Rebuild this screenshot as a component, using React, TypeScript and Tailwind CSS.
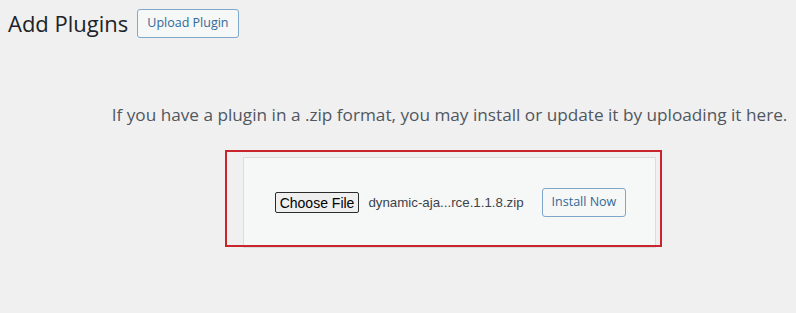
import React from "react";

export default function App() {
  return (
    <div
      className="w-[796px] h-[313px] bg-[#f0f0f1] overflow-hidden text-[#3c434a]"
      style={{ fontFamily: '"Open Sans", sans-serif' }}
    >
      <div className="flex items-center pl-[8px] pt-[9px] gap-[9px]">
        <h1 className="text-[22px] leading-[29px] text-[#1d2327] font-normal">Add Plugins</h1>
        <button className="h-[29px] px-[9px] border border-[#7fa7c9] rounded-[3px] bg-[#f6f7f7] text-[12.5px] text-[#2f6a99]">
          Upload Plugin
        </button>
      </div>
      <div className="flex flex-col items-center pl-[103px]">
        <p className="mt-[65px] text-[17.2px] leading-[24px] text-[#50575e]">
          If you have a plugin in a .zip format, you may install or update it by uploading it here.
        </p>
        <div className="relative mt-[30px] w-[413px] h-[91px] bg-[#f6f7f7] border border-[#dcdcde] flex items-center justify-center">
          <div className="flex items-center pl-[2px]">
            <button
              className="h-[21px] px-[4px] border border-[#2b2b2b] rounded-[2px] bg-[#efefef] text-[14px] leading-[18px] text-black"
              style={{ fontFamily: '"Liberation Sans", Arial, sans-serif' }}
            >
              Choose File
            </button>
            <span
              className="ml-[9px] text-[13.3px] text-[#3c434a]"
              style={{ fontFamily: '"Liberation Sans", Arial, sans-serif' }}
            >
              dynamic-aja...rce.1.1.8.zip
            </span>
            <button className="ml-[18px] h-[29px] px-[9px] border border-[#7fa7c9] rounded-[3px] bg-[#f6f7f7] text-[12.5px] text-[#2f6a99]">
              Install Now
            </button>
          </div>
          <div className="absolute left-[-19px] top-[-8px] w-[437px] h-[97px] border-2 border-[#c8262c] pointer-events-none" />
        </div>
      </div>
    </div>
  );
}
